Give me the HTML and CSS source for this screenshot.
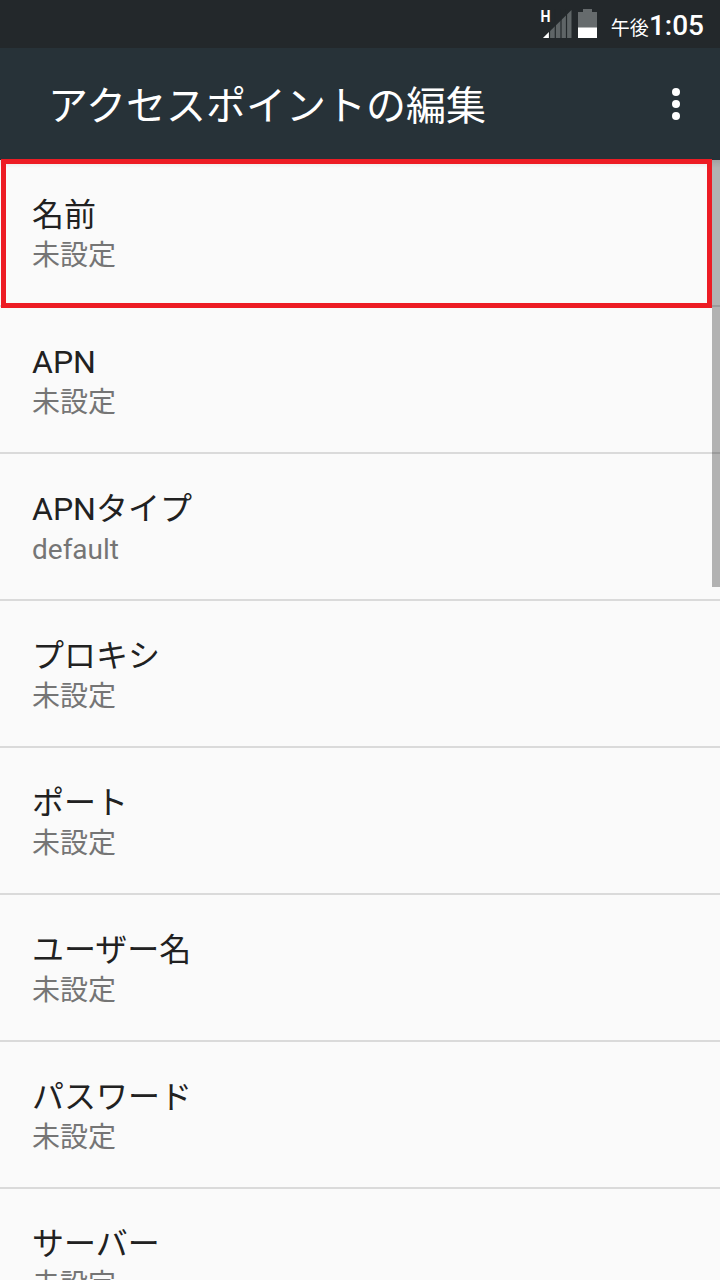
FILE: index.html
```html
<!DOCTYPE html>
<html lang="ja">
<head>
	<meta charset="UTF-8">
	<title>アクセスポイントの編集</title>
	<link rel="stylesheet" href="styles.css">
</head>
<body>
<div class="status_bar">
	<svg class="signal" width="32" height="30" viewBox="0 0 32 30">
		<path d="M2 29L30.500 1V29Z" fill="#5f6567"/>
		<path d="M2 29L8 23V29Z" fill="#fff"/>
		<path d="M8.500 0V30M14.300 0V30M20 0V30M25.500 0V30" stroke="#23282b" stroke-width="1.2"/>
		<text class="network" x="-0.500" y="13" textLength="10" lengthAdjust="spacingAndGlyphs">H</text>
	</svg>
	<svg class="battery" width="19" height="30" viewBox="0 0 19 30">
		<path d="M0 3H5V0H14V3H19V29H0Z" fill="#666b6d"/>
		<path d="M0 18.500H19V29H0Z" fill="#fff"/>
	</svg>
	<div class="clock"><span class="ampm">午後</span>1:05</div>
</div>
<div class="app_bar">
	<h1>アクセスポイントの編集</h1>
	<svg class="more" width="8" height="32" viewBox="0 0 8 32">
		<circle cx="4" cy="4" r="4"/>
		<circle cx="4" cy="16" r="4"/>
		<circle cx="4" cy="28" r="4"/>
	</svg>
</div>
<div class="content">
	<ul class="settings">
		<li><div class="name">名前</div><div class="value">未設定</div></li>
		<li><div class="name">APN</div><div class="value">未設定</div></li>
		<li><div class="name">APNタイプ</div><div class="value">default</div></li>
		<li><div class="name">プロキシ</div><div class="value">未設定</div></li>
		<li><div class="name">ポート</div><div class="value">未設定</div></li>
		<li><div class="name">ユーザー名</div><div class="value">未設定</div></li>
		<li><div class="name">パスワード</div><div class="value">未設定</div></li>
		<li><div class="name">サーバー</div><div class="value">未設定</div></li>
	</ul>
	<div class="scrollbar"></div>
	<div class="highlight"></div>
</div>
</body>
</html>
```

FILE: styles.css
```css
* {
	box-sizing: border-box;
}
body {
	margin: 0;
	height: 1280px;
	display: flex;
	flex-direction: column;
	overflow: hidden;
	background-color: #fafafa;
	font-family: Roboto, "Noto Sans CJK JP", sans-serif;
}
.status_bar {
	height: 48px;
	flex: none;
	display: flex;
	justify-content: flex-end;
	padding: 9px 16px 0 0;
	background-color: #23282b;
	color: #fff;
}
.signal {
	overflow: visible;
}
.network {
	fill: #fff;
	font-size: 17px;
	font-weight: 700;
}
.battery {
	margin: 0 14px 0 5px;
}
.clock {
	font-size: 28px;
	font-weight: 500;
	line-height: 34px;
}
.ampm {
	font-size: 19px;
	font-weight: 400;
}
.app_bar {
	height: 112px;
	flex: none;
	display: flex;
	align-items: center;
	justify-content: space-between;
	padding: 0 40px 0 48px;
	background-color: #273238;
}
h1 {
	margin: 0;
	padding-top: 6px;
	color: #fff;
	font-size: 40px;
	font-weight: 400;
	line-height: 48px;
}
.more {
	fill: #fff;
}
.content {
	position: relative;
	flex: 1;
	min-height: 0;
}
.settings {
	height: 100%;
	margin: 0;
	padding: 0;
	overflow: hidden;
	list-style: none;
	background: linear-gradient(#e4e4e4, #fafafa 8px);
}
.settings li {
	height: 147px;
	padding: 35px 32px 0;
	border-bottom: 2px solid #dadada;
}
.name {
	color: #212121;
	font-size: 32px;
	line-height: 40px;
}
.value {
	color: #757575;
	font-size: 28px;
	line-height: 42px;
}
.scrollbar {
	position: absolute;
	top: 0;
	right: 0;
	width: 8px;
	height: 427px;
	background-color: rgba(0, 0, 0, 0.285);
}
/* frame around the first field */
.highlight {
	position: absolute;
	top: -1px;
	left: 1px;
	width: 711px;
	height: 149px;
	border: 5px solid #ed1c24;
}
```
